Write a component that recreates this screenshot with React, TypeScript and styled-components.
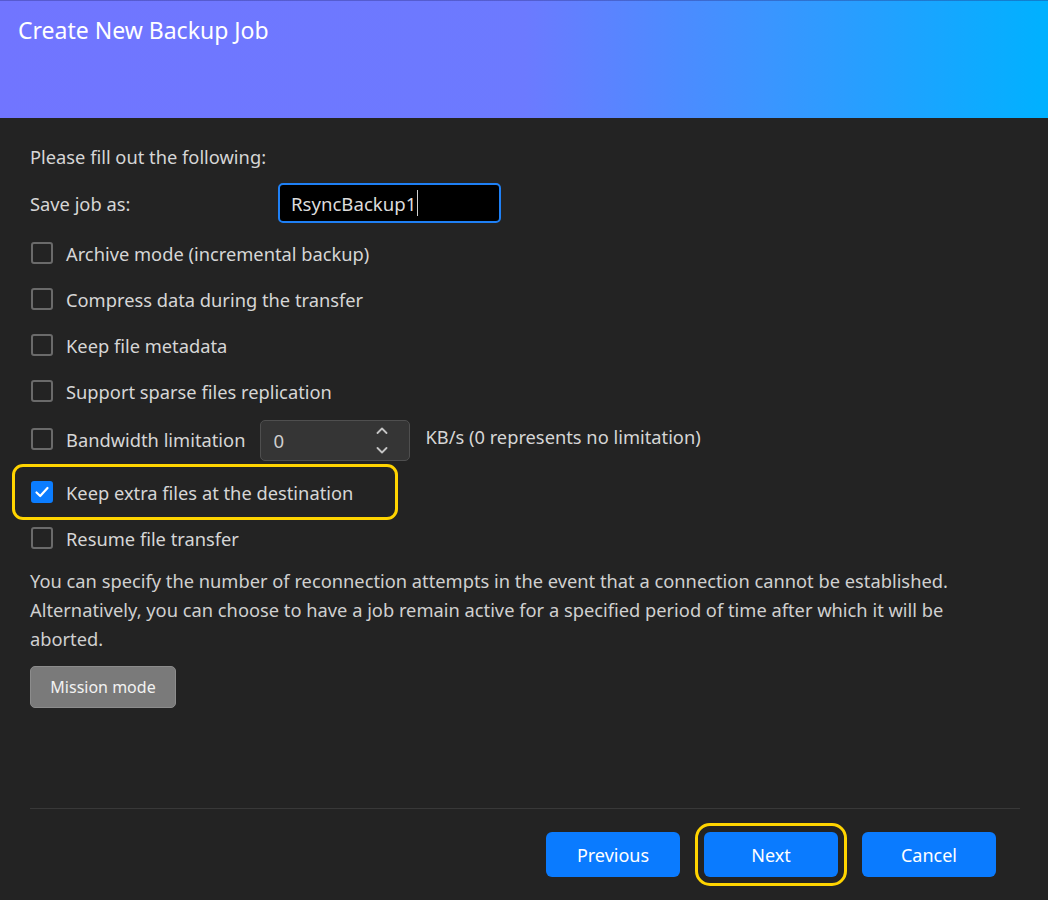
import React from 'react'
import styled, { createGlobalStyle } from 'styled-components'

const GlobalStyle = createGlobalStyle`
  html, body {
    margin: 0;
    padding: 0;
    background: #232323;
  }
  body {
    font-family: "Noto Sans", "Open Sans", sans-serif;
  }
`

const Dialog = styled.div`
  width: 1048px;
  height: 900px;
  display: flex;
  flex-direction: column;
  background: #232323;
  color: #d6d6d6;
  overflow: hidden;
`

const Header = styled.div`
  height: 118px;
  flex-shrink: 0;
  box-sizing: border-box;
  padding: 14px 18px 0;
  border-top: 1px solid rgba(40, 40, 120, 0.35);
  background: linear-gradient(90deg, #7175ff 0%, #6c7aff 50%, #3996ff 74%, #00b1ff 100%);
`

const Title = styled.h1`
  margin: 0;
  font-size: 23px;
  font-weight: 400;
  line-height: 30px;
  color: #ffffff;
`

const Body = styled.div`
  flex: 1;
  display: flex;
  flex-direction: column;
  padding: 0 28px 0 30px;
  font-size: 18.3px;
`

const Intro = styled.p`
  margin: 27px 0 0;
  line-height: 24px;
`

const FieldRow = styled.div`
  margin-top: 14px;
  height: 40px;
  display: flex;
  align-items: center;
`

const FieldLabel = styled.span`
  width: 248px;
  flex-shrink: 0;
`

const TextInput = styled.div`
  width: 223px;
  height: 40px;
  box-sizing: border-box;
  border: 2px solid #1f80f5;
  border-radius: 5px;
  background: #000000;
  padding: 0 11px;
  display: flex;
  align-items: center;
  font-size: 18.6px;
  color: #dcdcdc;
`

const Caret = styled.span`
  width: 1px;
  height: 26px;
  margin-left: 1px;
  background: #d0d0d0;
`

const Options = styled.div`
  margin-top: 7px;
  display: flex;
  flex-direction: column;
`

const OptionRow = styled.label<{ h?: number }>`
  height: ${({ h }) => h ?? 46}px;
  display: flex;
  align-items: center;
  gap: 13px;
  padding-left: 1px;
`

const Highlight = styled.div`
  height: 56px;
  width: 386px;
  box-sizing: border-box;
  margin-left: -18px;
  border: 3px solid #ffd400;
  border-radius: 11px;
  display: flex;
  align-items: center;
  gap: 13px;
  padding-left: 16px;
`

const Box = styled.span<{ checked?: boolean }>`
  width: 22px;
  height: 22px;
  box-sizing: border-box;
  flex-shrink: 0;
  border-radius: 3px;
  border: 2px solid ${({ checked }) => (checked ? '#0b7dff' : '#6a6a6a')};
  background: ${({ checked }) => (checked ? '#0b7dff' : 'transparent')};
  display: flex;
  align-items: center;
  justify-content: center;
`

const NumberBox = styled.div`
  width: 150px;
  height: 41px;
  box-sizing: border-box;
  margin-left: 2px;
  border: 1px solid #4f4f4f;
  border-radius: 5px;
  background: #353535;
  display: flex;
  align-items: center;
  justify-content: space-between;
  padding: 0 21px 0 12px;
  font-size: 18.6px;
  color: #cfcfcf;
  align-self: flex-end;
  margin-bottom: 3px;
`

const Spinner = styled.span`
  display: flex;
  flex-direction: column;
  gap: 13px;
  margin-top: -1px;
`

const Unit = styled.span`
  margin-left: 2px;
  align-self: flex-start;
  margin-top: 10px;
`

const Note = styled.p`
  margin: 10px 0 0;
  line-height: 29px;
  color: #d0d0d0;
`

const GreyButton = styled.button`
  margin-top: 13px;
  align-self: flex-start;
  width: 146px;
  height: 42px;
  border: 1px solid #8c8c8c;
  border-radius: 5px;
  background: #7a7a7a;
  color: #f2f2f2;
  font-family: inherit;
  font-size: 16px;
`

const Footer = styled.div`
  margin-top: auto;
  border-top: 1px solid #383838;
  height: 92px;
  box-sizing: border-box;
  display: flex;
  justify-content: flex-end;
  align-items: flex-start;
  gap: 24px;
  padding: 23px 24px 0 0;
`

const PrimaryButton = styled.button<{ focused?: boolean }>`
  width: 134px;
  height: 45px;
  border: none;
  border-radius: 6px;
  background: #0a7bff;
  color: #ffffff;
  font-family: inherit;
  font-size: 18px;
  outline: ${({ focused }) => (focused ? '3px solid #ffd400' : 'none')};
  outline-offset: 6px;
`

const Check = () => (
  <svg width="16" height="16" viewBox="0 0 16 16">
    <path d="M2.5 8.5 L6.2 12 L13.5 4" fill="none" stroke="#ffffff" strokeWidth="2.2" strokeLinecap="round" strokeLinejoin="round" />
  </svg>
)

const Chevron = ({ up }: { up?: boolean }) => (
  <svg width="12" height="7" viewBox="0 0 12 7">
    <path d={up ? 'M1.5 6 L6 1.5 L10.5 6' : 'M1.5 1 L6 5.5 L10.5 1'} fill="none" stroke="#c4c4c4" strokeWidth="1.8" strokeLinecap="round" strokeLinejoin="round" />
  </svg>
)

const Option = ({ label, checked }: { label: string; checked?: boolean }) => (
  <OptionRow>
    <Box checked={checked}>{checked && <Check />}</Box>
    {label}
  </OptionRow>
)

export default function App() {
  return (
    <Dialog>
      <GlobalStyle />
      <Header>
        <Title>Create New Backup Job</Title>
      </Header>
      <Body>
        <Intro>Please fill out the following:</Intro>
        <FieldRow>
          <FieldLabel>Save job as:</FieldLabel>
          <TextInput>
            RsyncBackup1
            <Caret />
          </TextInput>
        </FieldRow>
        <Options>
          <Option label="Archive mode (incremental backup)" />
          <Option label="Compress data during the transfer" />
          <Option label="Keep file metadata" />
          <Option label="Support sparse files replication" />
          <OptionRow h={50}>
            <Box />
            Bandwidth limitation
            <NumberBox>
              0
              <Spinner>
                <Chevron up />
                <Chevron />
              </Spinner>
            </NumberBox>
            <Unit>KB/s (0 represents no limitation)</Unit>
          </OptionRow>
          <Highlight>
            <Box checked>
              <Check />
            </Box>
            Keep extra files at the destination
          </Highlight>
          <OptionRow h={36}>
            <Box />
            Resume file transfer
          </OptionRow>
        </Options>
        <Note>
          You can specify the number of reconnection attempts in the event that a connection cannot be established.
          Alternatively, you can choose to have a job remain active for a specified period of time after which it will be
          aborted.
        </Note>
        <GreyButton>Mission mode</GreyButton>
        <Footer>
          <PrimaryButton>Previous</PrimaryButton>
          <PrimaryButton focused>Next</PrimaryButton>
          <PrimaryButton>Cancel</PrimaryButton>
        </Footer>
      </Body>
    </Dialog>
  )
}
